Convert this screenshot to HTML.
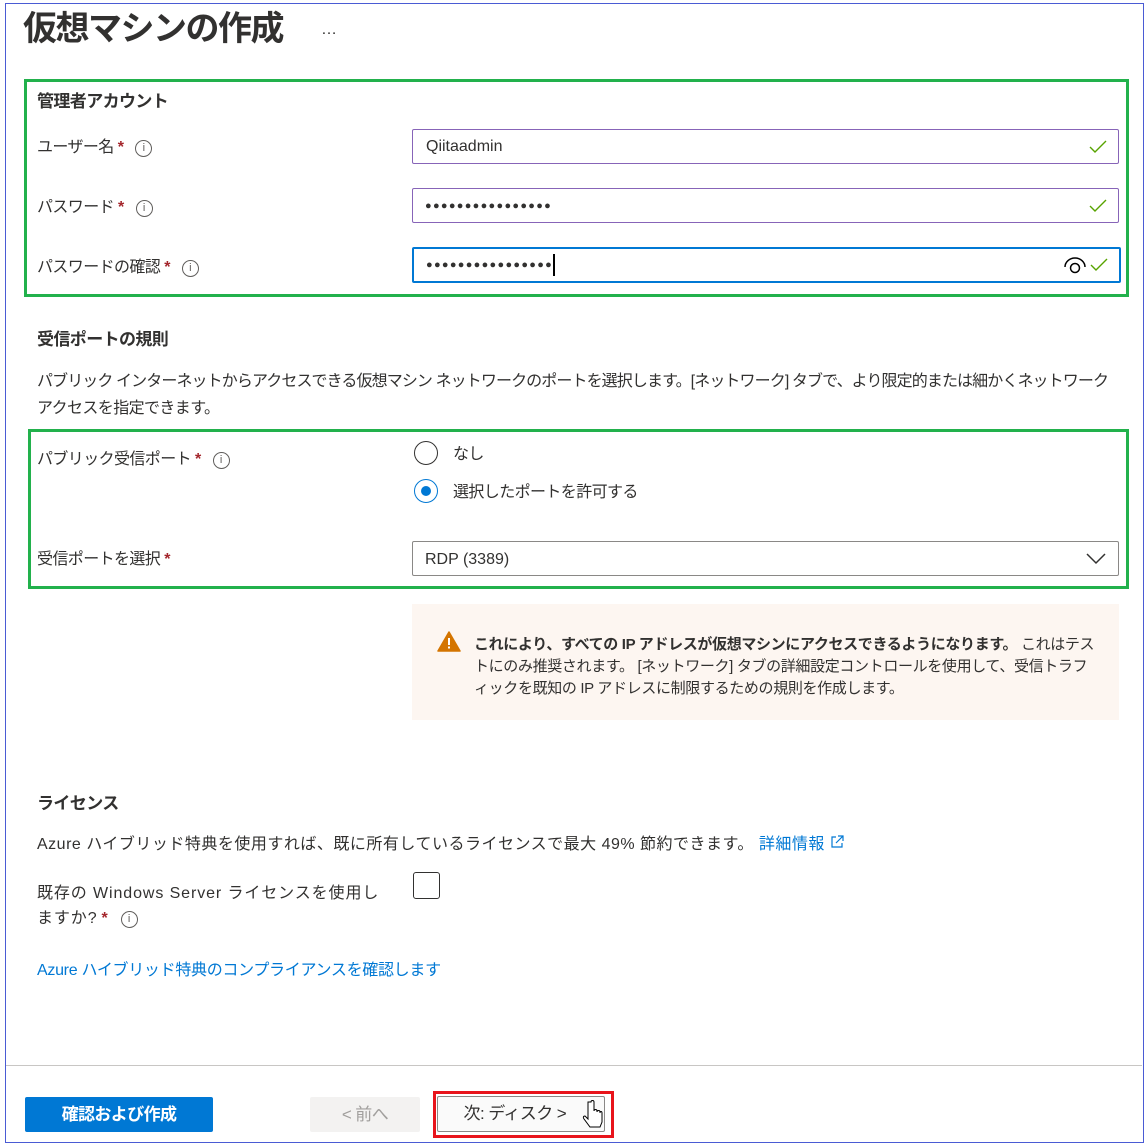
<!DOCTYPE html>
<html><head><meta charset="utf-8"><style>
body{margin:0;width:1148px;height:1146px;background:#fff;position:relative;overflow:hidden;font-family:"Liberation Sans","Noto Sans CJK JP",sans-serif;color:#323130;font-size:16px;letter-spacing:-0.6px}
.a{position:absolute;white-space:nowrap;line-height:20px}
.b{font-weight:bold}
.s{color:#a4262c;font-weight:bold;margin-left:4px}
.i{display:inline-block;width:15px;height:15px;border:1px solid #605e5c;border-radius:50%;font-size:11px;line-height:15px;text-align:center;margin-left:12px;vertical-align:1px;color:#605e5c;letter-spacing:0}
.inp{position:absolute;left:412px;width:705px;border:1px solid #8764b8;border-radius:2px;background:#fff}
.ck{position:absolute;right:10px;top:50%;margin-top:-10px}
.rad{position:absolute;width:24px;height:24px;border:1px solid #323130;border-radius:50%;box-sizing:border-box}
.lk{color:#0078d4}
</style></head><body>
<div style="position:absolute;left:5px;top:3px;width:1137px;height:1138px;border:1px solid #4a5bd4"></div>
<div class="a" style="left:23px;top:9px;font-size:34px;line-height:40px;letter-spacing:-1.5px;font-weight:bold;color:#323130">仮想マシンの作成</div>
<div class="a" style="left:321px;top:20px;font-size:16px">…</div>

<div style="position:absolute;left:24px;top:79px;width:1099px;height:212px;border:3px solid #22b14c"></div>
<div class="a b" style="left:37px;top:92px;font-size:17px">管理者アカウント</div>
<div class="a" style="left:37px;top:138px">ユーザー名<span class="s">*</span><span class="i">i</span></div>
<div class="a" style="left:37px;top:198px">パスワード<span class="s">*</span><span class="i">i</span></div>
<div class="a" style="left:37px;top:258px">パスワードの確認<span class="s">*</span><span class="i">i</span></div>
<div class="inp" style="top:129px;height:33px"><span class="a" style="left:13px;top:7px;letter-spacing:0">Qiitaadmin</span><svg class="ck" width="20" height="20" viewBox="0 0 20 20"><path d="M2 10l5 5 11-11" fill="none" stroke="#57a300" stroke-width="1.4"/></svg></div>
<div class="inp" style="top:188px;height:33px"><span class="a" style="left:12px;top:7px;letter-spacing:1.3px;font-size:11px">●●●●●●●●●●●●●●●●</span><svg class="ck" width="20" height="20" viewBox="0 0 20 20"><path d="M2 10l5 5 11-11" fill="none" stroke="#57a300" stroke-width="1.4"/></svg></div>
<div class="inp" style="top:247px;height:32px;border:2px solid #0078d4"><span class="a" style="left:12px;top:6px;letter-spacing:1.3px;font-size:11px">●●●●●●●●●●●●●●●●</span><span style="position:absolute;left:139px;top:5px;width:2px;height:22px;background:#000"></span>
<svg style="position:absolute;right:32px;top:7px" width="24" height="18" viewBox="0 0 24 18"><path d="M2 11a10 9 0 0 1 20 0" fill="none" stroke="#000" stroke-width="1.5"/><circle cx="12" cy="12" r="4.5" fill="none" stroke="#000" stroke-width="1.5"/></svg>
<svg class="ck" width="20" height="20" viewBox="0 0 20 20"><path d="M2 10l5 5 11-11" fill="none" stroke="#57a300" stroke-width="1.4"/></svg></div>

<div class="a b" style="left:37px;top:330px;font-size:17px">受信ポートの規則</div>
<div class="a" style="left:37px;top:372px;letter-spacing:-0.9px">パブリック インターネットからアクセスできる仮想マシン ネットワークのポートを選択します。[ネットワーク] タブで、より限定的または細かくネットワーク</div>
<div class="a" style="left:37px;top:399px">アクセスを指定できます。</div>

<div style="position:absolute;left:28px;top:429px;width:1095px;height:154px;border:3px solid #22b14c"></div>
<div class="a" style="left:37px;top:450px">パブリック受信ポート<span class="s">*</span><span class="i">i</span></div>
<div class="rad" style="left:414px;top:441px"></div><div class="a" style="left:453px;top:445px">なし</div>
<div class="rad" style="left:414px;top:479px;border-color:#0078d4"><div style="position:absolute;left:6px;top:6px;width:10px;height:10px;border-radius:50%;background:#0078d4"></div></div><div class="a" style="left:453px;top:483px">選択したポートを許可する</div>
<div class="a" style="left:37px;top:550px">受信ポートを選択<span class="s">*</span></div>
<div class="inp" style="top:541px;height:33px;border-color:#8a8886"><span class="a" style="left:12px;top:8px;letter-spacing:0">RDP (3389)</span><svg style="position:absolute;right:12px;top:11px" width="20" height="12" viewBox="0 0 20 12"><path d="M1 1l9 9 9-9" fill="none" stroke="#323130" stroke-width="1.5"/></svg></div>

<div style="position:absolute;left:412px;top:604px;width:707px;height:116px;background:#fdf6f1"></div>
<svg style="position:absolute;left:437px;top:631px" width="24" height="21" viewBox="0 0 24 21"><path d="M12 1L23 20H1Z" fill="#d47500" stroke="#d47500" stroke-linejoin="round" stroke-width="1.5"/><rect x="11" y="7" width="2" height="7" fill="#fff"/><rect x="11" y="15.5" width="2" height="2" fill="#fff"/></svg>
<div class="a" style="left:474px;top:634px;font-size:15px;line-height:22px;letter-spacing:-0.35px"><b>これにより、すべての IP アドレスが仮想マシンにアクセスできるようになります。</b> これはテス<br>トにのみ推奨されます。 [ネットワーク] タブの詳細設定コントロールを使用して、受信トラフ<br>ィックを既知の IP アドレスに制限するための規則を作成します。</div>

<div class="a b" style="left:37px;top:794px;font-size:17px">ライセンス</div>
<div class="a" style="left:37px;top:835px;letter-spacing:0.5px">Azure ハイブリッド特典を使用すれば、既に所有しているライセンスで最大 49% 節約できます。 <span class="lk">詳細情報 <svg width="14" height="14" viewBox="0 0 14 14"><path d="M6 2H2v10h10V8M8 1h5v5M13 1L6 8" fill="none" stroke="#0078d4" stroke-width="1.2"/></svg></span></div>
<div class="a" style="left:37px;top:881px;line-height:25px;letter-spacing:0.9px">既存の Windows Server ライセンスを使用し<br>ますか?<span class="s">*</span><span class="i">i</span></div>
<div style="position:absolute;left:413px;top:872px;width:25px;height:25px;border:1px solid #323130;border-radius:3px"></div>
<div class="a lk" style="left:37px;top:961px;letter-spacing:-0.3px">Azure ハイブリッド特典のコンプライアンスを確認します</div>

<div style="position:absolute;left:6px;top:1065px;width:1136px;height:1px;background:#c8c6c4"></div>
<div style="position:absolute;left:25px;top:1097px;width:188px;height:35px;background:#0078d4;border-radius:2px;color:#fff;font-weight:bold;text-align:center;line-height:35px;font-size:17px">確認および作成</div>
<div style="position:absolute;left:310px;top:1097px;width:110px;height:35px;background:#f3f2f1;border-radius:2px;color:#a19f9d;text-align:center;line-height:35px;font-size:17px">&lt; 前へ</div>
<div style="position:absolute;left:433px;top:1091px;width:175px;height:41px;border:3px solid #e8141b"></div>
<div style="position:absolute;left:437px;top:1096px;width:166px;height:34px;border:1px solid #8a8886;border-radius:2px;background:#fafafa;color:#323130;text-align:center;line-height:34px;font-size:17px">次: ディスク &gt;&nbsp;&nbsp;&nbsp;</div>
<svg style="position:absolute;left:582px;top:1100px" width="22" height="38" viewBox="0 0 22 38"><path d="M6 2v17l-3-3c-2 0-2 2-1 3l6 8h10l2-5v-9c0-2-2-2-2 0v-1c0-2-3-2-3 0v-1c0-2-3-2-3 0V2c0-2-3-2-3 0z" fill="#fff" stroke="#000" stroke-width="1"/></svg>
</body></html>
